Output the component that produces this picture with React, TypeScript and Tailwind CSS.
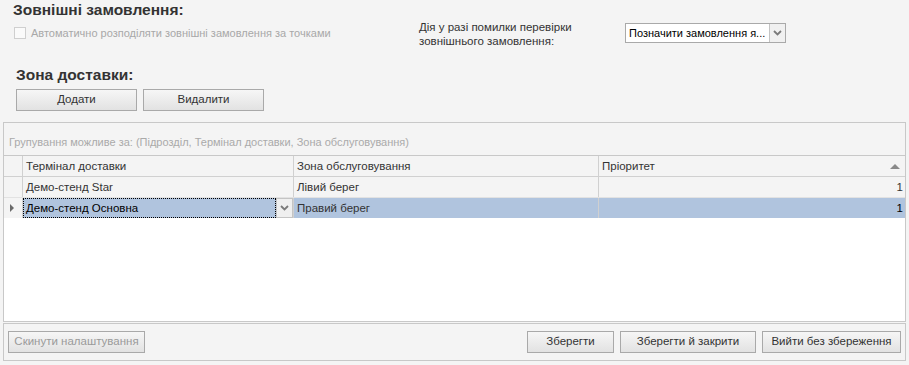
import React from "react";

const font = { fontFamily: '"Liberation Sans", Arial, sans-serif' };

function Chevron({ className = "" }: { className?: string }) {
  return (
    <svg className={className} width="9" height="6" viewBox="0 0 9 6" fill="none">
      <path d="M1 1l3.5 3.5L8 1" stroke="#7a7a7a" strokeWidth="1.8" />
    </svg>
  );
}

function Btn({ children, w, disabled }: { children: React.ReactNode; w: string; disabled?: boolean }) {
  return (
    <button
      className={`${w} h-[22px] border border-[#a9a9a9] bg-gradient-to-b from-[#f6f6f6] to-[#e2e2e2] text-[11.5px] leading-none ${
        disabled ? "text-[#9a9a9a]" : "text-[#333]"
      }`}
    >
      {children}
    </button>
  );
}

const rows = [
  { terminal: "Демо-стенд Star", zone: "Лівий берег", priority: 1 },
  { terminal: "Демо-стенд Основна", zone: "Правий берег", priority: 1 },
];

export default function App() {
  return (
    <div className="w-[909px] h-[365px] bg-[#f4f4f4] text-[#333] overflow-hidden flex flex-col" style={font}>
      {/* top settings */}
      <div className="flex h-[52px]">
        <div className="w-[419px] pl-[13px]">
          <div className="text-[15.5px] font-bold leading-[18px] pt-[1px] text-[#333]">Зовнішні замовлення:</div>
          <div className="flex items-center gap-[5px] mt-[7px] pl-[1px]">
            <span className="w-[12px] h-[12px] border border-[#cfcfcf] bg-[#fafafa]" />
            <span className="text-[11px] text-[#a8a8a8] leading-[14px]">Автоматично розподіляти зовнішні замовлення за точками</span>
          </div>
        </div>
        <div className="w-[206px] pt-[20px] text-[11.5px] leading-[14px] text-[#333]">
          Дія у разі помилки перевірки
          <br />
          зовнішнього замовлення:
        </div>
        <div className="pt-[23px]">
          <div className="flex w-[161px] h-[20px] border border-[#a9a9a9] bg-white">
            <div className="flex-1 pl-[3px] text-[11px] leading-[18px] text-black whitespace-nowrap overflow-hidden">
              Позначити замовлення я...
            </div>
            <div className="w-[16px] border-l border-[#c4c4c4] bg-[#f0f0f0] flex items-center justify-center">
              <Chevron />
            </div>
          </div>
        </div>
      </div>

      {/* delivery zone */}
      <div className="pl-[16px] mt-[14px]">
        <div className="text-[15.5px] font-bold leading-[18px] text-[#333]">Зона доставки:</div>
        <div className="flex gap-[6px] mt-[5px]">
          <Btn w="w-[121px]">Додати</Btn>
          <Btn w="w-[121px]">Видалити</Btn>
        </div>
      </div>

      {/* grid */}
      <div className="mx-[3px] mt-[11px] h-[200px] border border-[#c8c8c8] bg-white flex flex-col text-[11.5px]">
        <div className="h-[33px] bg-[#f4f4f4] border-b border-[#c8c8c8] pl-[5px] pt-[12px] leading-[14px] text-[11px] text-[#aaaaaa]">
          Групування можливе за: (Підрозділ, Термінал доставки, Зона обслуговування)
        </div>
        <div className="grid grid-cols-[19px_271px_305px_1fr] h-[21px] bg-[#f4f4f4] border-b border-[#d0d0d0] leading-[20px]">
          <div className="border-r border-[#d0d0d0]" />
          <div className="border-r border-[#d0d0d0] pl-[3px]">Термінал доставки</div>
          <div className="border-r border-[#d0d0d0] pl-[3px]">Зона обслуговування</div>
          <div className="relative pl-[3px]">
            Пріоритет
            <span className="absolute right-[5px] top-[8px] w-0 h-0 border-l-[5px] border-r-[5px] border-b-[5px] border-l-transparent border-r-transparent border-b-[#8a8a8a]" />
          </div>
        </div>
        {rows.map((r, i) => {
          const sel = i === 1;
          return (
            <div
              key={i}
              className={`grid grid-cols-[19px_271px_305px_1fr] ${sel ? "h-[20px]" : "h-[21px] border-b border-[#e2e2e2]"} leading-[20px]`}
            >
              <div className="bg-[#f4f4f4] border-r border-[#d0d0d0] flex items-center justify-center">
                {sel && (
                  <span className="w-0 h-0 border-t-[4px] border-b-[4px] border-l-[4px] border-t-transparent border-b-transparent border-l-[#6a6a6a] -ml-[2px]" />
                )}
              </div>
              {sel ? (
                <div className="flex bg-[#b0c4de] border-r border-[#d0d0d0]">
                  <div className="flex-1 border border-dotted border-black pl-[2px] leading-[18px] text-black">{r.terminal}</div>
                  <div className="w-[17px] bg-[#efefef] border border-[#c4c4c4] flex items-center justify-center">
                    <Chevron />
                  </div>
                </div>
              ) : (
                <div className="bg-[#f4f4f4] border-r border-[#d0d0d0] pl-[3px]">{r.terminal}</div>
              )}
              <div className={`${sel ? "bg-[#b0c4de]" : "bg-[#f4f4f4]"} border-r border-[#d0d0d0] pl-[3px]`}>{r.zone}</div>
              <div className={`${sel ? "bg-[#b0c4de] text-black" : "bg-[#f4f4f4]"} text-right pr-[2px]`}>{r.priority}</div>
            </div>
          );
        })}
        <div className="flex-1" />
      </div>

      {/* footer */}
      <div className="mx-[3px] mt-[1px] h-[38px] border border-[#c8c8c8] bg-[#f4f4f4] flex items-center px-[4px]">
        <Btn w="w-[137px]" disabled>
          Скинути налаштування
        </Btn>
        <div className="flex-1" />
        <div className="flex gap-[6px]">
          <Btn w="w-[87px]">Зберегти</Btn>
          <Btn w="w-[136px]">Зберегти й закрити</Btn>
          <Btn w="w-[139px]">Вийти без збереження</Btn>
        </div>
      </div>
    </div>
  );
}
